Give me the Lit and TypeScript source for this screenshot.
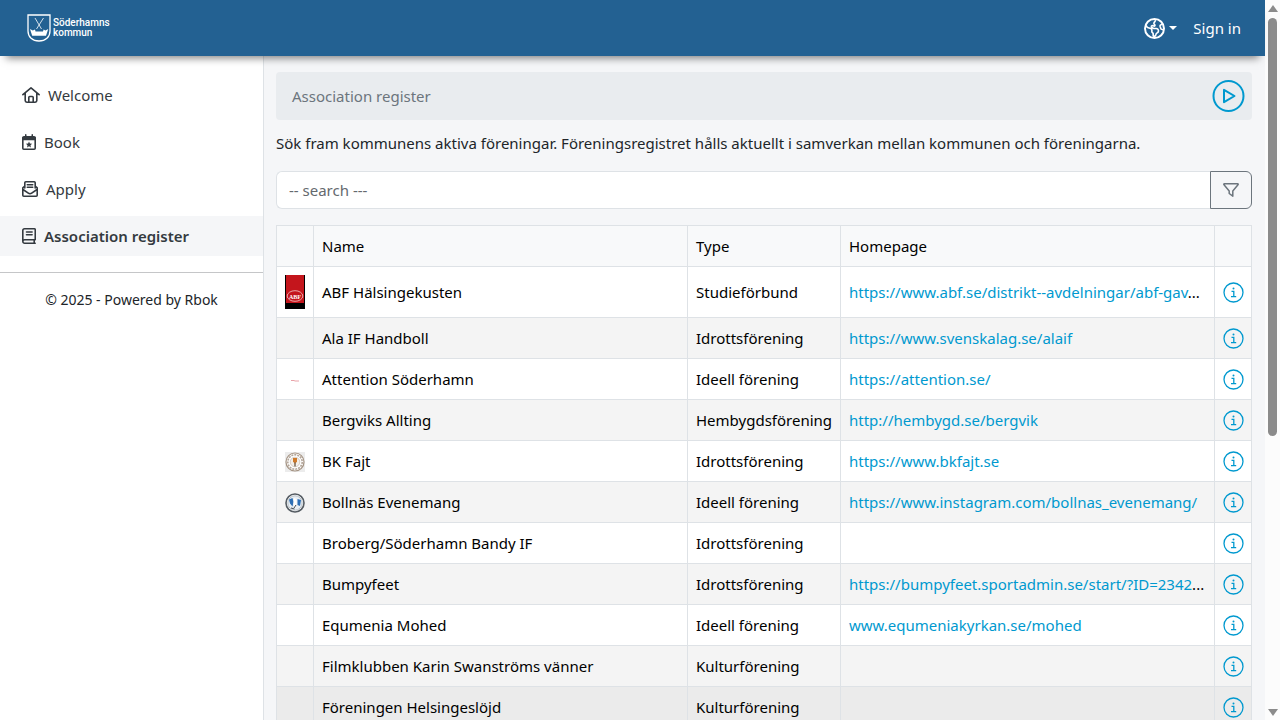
import { LitElement, html, css, nothing } from "lit";
import { customElement } from "lit/decorators.js";
import { classMap } from "lit/directives/class-map.js";

const homeIcon = html`<svg width="18" height="16" viewBox="0 0 18 16" fill="none" stroke="currentColor" stroke-width="1.6" stroke-linecap="round" stroke-linejoin="round" aria-hidden="true">
  <path d="M.9 7.7 9 .9l8.1 6.8M3.2 6v7.6c0 1 .6 1.6 1.6 1.6h8.4c1 0 1.6-.6 1.6-1.6V6M6.8 15V10.4c0-.6.3-.9.9-.9h2.600c.6 0 .9.3.9.9V15"/></svg>`;
const bookIcon = html`<svg width="14" height="16" viewBox="0 0 14 16" aria-hidden="true">
  <path fill="none" stroke="currentColor" stroke-width="1.6" d="M.8 4h12.400v10.200a1 1 0 0 1-1 1H1.800a1 1 0 0 1-1-1z"/>
  <path fill="currentColor" d="M0 6.300V4a2 2 0 0 1 2-2h1V.7C3 .3 3.300 0 3.750 0s.750.300.750.700V2h5V.7c0-.4.300-.7.750-.7s.750.300.750.700V2h1a2 2 0 0 1 2 2v2.300z"/>
  <path fill="currentColor" d="m7 7.400.9 2 2.200.300-1.600 1.500.400 2.200L7 12.300l-1.900 1.100.400-2.200-1.600-1.500 2.200-.3z"/></svg>`;
const applyIcon = html`<svg width="16" height="16" viewBox="0 0 16 16" fill="none" stroke="currentColor" stroke-width="1.6" stroke-linecap="round" stroke-linejoin="round" aria-hidden="true">
  <path d="M2.800 7V1.800c0-.6.400-1 1-1h8.400c.6 0 1 .4 1 1V7M5.300 3.700h5.400M5.300 6.200h5.400M2.800 5 .8 6.800v7.400c0 .6.400 1 1 1h12.400c.6 0 1-.4 1-1V6.800L13.200 5M1 8.500l5.300 3.700c1 .7 2.400.7 3.400 0L15 8.500"/></svg>`;
const registerIcon = html`<svg width="14" height="16" viewBox="0 0 14 16" fill="none" stroke="currentColor" stroke-width="1.6" stroke-linecap="round" stroke-linejoin="round" aria-hidden="true">
  <path d="M13.200 11.700H2.600a1.750 1.750 0 0 0 0 3.500h10.600M12.200 11.900v3.200M.8 13.300V2.600c0-1 .8-1.800 1.850-1.800h9.700c.5 0 .9.400.9.900v10M4.500 4h5.600M4.500 6.800h5.600"/></svg>`;
const globeIcon = html`<svg width="21" height="21" viewBox="0 0 512 512" fill="none" stroke="currentColor" stroke-width="40" stroke-linejoin="round" aria-hidden="true">
  <circle cx="256" cy="256" r="232" stroke-width="48"/>
  <path d="M48 180l19 29c8 15 22 25 38 30l58 17c17 5 29 20 29 38v40c0 11 6 21 16 26s16 15 16 26v39c0 16 15 27 30 23 16-5 28-18 32-34l3-11c4-17 15-32 30-40l8-5c15-8 25-24 25-41v-9c0-13-5-25-14-34l-4-4c-9-9-21-14-34-14h-43c-11 0-22-3-32-8l-34-20c-5-3-8-7-10-12-3-9 1-20 11-24l6-3c6-4 14-4 21-2l23 8c8 3 17 0 22-7 5-7 4-17-1-23l-14-16c-10-12-10-30 0-42l16-18c9-10 10-25 4-37M446 151l-34 14c-16 6-24 24-19 40l17 50c4 11 12 18 23 21l38 9"/></svg>`;
const playIcon = html`<svg width="33" height="33" viewBox="0 0 33 33" fill="none" stroke="currentColor" stroke-width="2" stroke-linejoin="round" aria-hidden="true">
  <circle cx="16.5" cy="16" r="15"/><path d="M12 9.800v12.400L22.500 16z"/></svg>`;
const filterIcon = html`<svg width="16" height="16" viewBox="0 0 16 16" fill="none" stroke="currentColor" stroke-width="1.500" stroke-linejoin="round" aria-hidden="true">
  <path d="M1.400 1.750h13.200c.6 0 .8.600.4 1.100L9.800 8.900v5.300L6.200 11.500V8.900L1 2.850c-.4-.5-.2-1.100.4-1.100z"/></svg>`;
const infoIcon = html`<svg width="21" height="21" viewBox="0 0 21 21" fill="none" stroke="currentColor" stroke-width="1.300" aria-hidden="true">
  <circle cx="10.500" cy="10.500" r="9.500"/><path d="M8.500 9.300h2.300v5.300M8 14.600h5.200"/><circle cx="10.500" cy="6.600" r="1" fill="currentColor" stroke="none"/></svg>`;
const shield = html`<svg width="24" height="28" viewBox="0 0 24 28" fill="none" stroke="#fff" aria-hidden="true">
  <path stroke-width="1.300" d="M1 1h22v16c0 6-4.500 10-11 10S1 23 1 17z"/>
  <path stroke-width=".8" d="m8 4 6.500 11M16.500 4 9.500 15"/>
  <path fill="#fff" stroke="none" d="m3 15 2.800 1.500 2.200-1 .5 2h7.500l.6-2 1.800 1 2.800-1.500-2.200 6.700H5.200z"/></svg>`;

const abfLogo = html`<svg width="20" height="34" viewBox="0 0 20 34" role="img" aria-label="ABF">
  <path d="M0 0h20v34H0z"/><path fill="#c4151c" d="M1 0h18v28H1z"/>
  <ellipse cx="10" cy="21" rx="7.800" ry="5.300" fill="none" stroke="#f3c9ca" stroke-width=".8"/>
  <text x="10" y="23.500" text-anchor="middle" font-family="Liberation Serif, serif" font-weight="700" font-size="6" fill="#fff">ABF</text></svg>`;
const attentionLogo = html`<svg class="emblem" width="20" height="20" viewBox="0 0 20 20" role="img" aria-label="Attention">
  <path stroke="#e9a3a9" stroke-width="1" fill="none" d="M6 10.500h3l1 .5h4"/></svg>`;
const fajtLogo = html`<svg class="emblem" width="20" height="20" viewBox="0 0 20 20" role="img" aria-label="BK Fajt">
  <path fill="#ececec" d="M0 0h20v20H0z"/><circle cx="10" cy="10" r="9" fill="#fff" stroke="#a59484" stroke-width="1.200"/>
  <circle cx="10" cy="10" r="7.200" fill="none" stroke="#b3a598" stroke-width="1.600" stroke-dasharray="2 1"/>
  <circle cx="10" cy="10" r="4.800" fill="#f4efe9" stroke="#c8bcb0" stroke-width=".7"/>
  <path fill="#cf7a2b" d="M8 6h4v3.500L10 12 8 9.500z"/><path stroke="#7d6a58" stroke-width="1.500" d="M10 10.500v4"/></svg>`;
const bollnasLogo = html`<svg class="emblem" width="20" height="20" viewBox="0 0 20 20" role="img" aria-label="Bollnäs Evenemang">
  <circle cx="10" cy="10" r="9" fill="#fff" stroke="#555c63" stroke-width="1.600"/>
  <circle cx="10" cy="10" r="7.200" fill="#e8eef4" stroke="#aab2ba" stroke-width=".8"/>
  <path fill="#2d6fb5" d="M4 6.500 7.500 5l1 4-1 4.500L5 10.500zM12.500 6l3.500 1-1 6-2.500-1z"/><path fill="#fff" d="m9 5 2.500 1v5L10 15l-1.500-4z"/>
  <path stroke="#444b52" fill="none" d="m6 15 3.500 1M11 12l-2 3"/></svg>`;

const menu = [
  { label: "Welcome", icon: homeIcon, active: false },
  { label: "Book", icon: bookIcon, active: false },
  { label: "Apply", icon: applyIcon, active: false },
  { label: "Association register", icon: registerIcon, active: true },
];

interface Association {
  name: string;
  type: string;
  url?: string;
  shortened?: boolean;
  logo?: unknown;
  current?: boolean;
}

const associations: Association[] = [
  { name: "ABF Hälsingekusten", type: "Studieförbund", url: "https://www.abf.se/distrikt--avdelningar/abf-gav", shortened: true, logo: abfLogo },
  { name: "Ala IF Handboll", type: "Idrottsförening", url: "https://www.svenskalag.se/alaif" },
  { name: "Attention Söderhamn", type: "Ideell förening", url: "https://attention.se/", logo: attentionLogo },
  { name: "Bergviks Allting", type: "Hembygdsförening", url: "http://hembygd.se/bergvik" },
  { name: "BK Fajt", type: "Idrottsförening", url: "https://www.bkfajt.se", logo: fajtLogo },
  { name: "Bollnäs Evenemang", type: "Ideell förening", url: "https://www.instagram.com/bollnas_evenemang/", logo: bollnasLogo },
  { name: "Broberg/Söderhamn Bandy IF", type: "Idrottsförening" },
  { name: "Bumpyfeet", type: "Idrottsförening", url: "https://bumpyfeet.sportadmin.se/start/?ID=2342", shortened: true },
  { name: "Equmenia Mohed", type: "Ideell förening", url: "www.equmeniakyrkan.se/mohed" },
  { name: "Filmklubben Karin Swanströms vänner", type: "Kulturförening" },
  { name: "Föreningen Helsingeslöjd", type: "Kulturförening", current: true },
];

@customElement("app-root")
export class AppRoot extends LitElement {
  static styles = css`
    :host { display: flex; height: 100vh; overflow: hidden; font: 15px/24px "Noto Sans", "Open Sans", sans-serif; color: #212529; background: #f5f6f8; }
    *, *::before, *::after { box-sizing: border-box; }
    a { text-decoration: none; color: #0099cf; }
    button { font: inherit; cursor: pointer; padding: 0; background: none; border: 0; }
    svg { display: block; flex: none; }
    .page { flex: 1; min-width: 0; display: flex; flex-direction: column; }
    .topbar { flex: none; height: 56px; padding: 0 24px 0 27px; display: flex; align-items: center; justify-content: space-between; background: #236192; color: #fff; box-shadow: 0 8px 8px -6px rgba(0, 0, 0, .5); z-index: 1; }
    .brand { display: flex; align-items: center; gap: 2px; color: #fff; }
    .wordmark { display: grid; font: 500 10px/10px Roboto, sans-serif; }
    .tools { display: flex; align-items: center; gap: 16px; }
    .language { display: flex; align-items: center; gap: 4px; color: #fff; }
    .caret { border: 4px solid transparent; border-top-color: currentColor; border-bottom: 0; }
    .signin { color: #fff; }
    .body { flex: 1; min-height: 0; display: flex; }
    .sidebar { flex: none; width: 264px; background: #fff; border-right: 1px solid #dee2e6; padding-top: 19px; }
    .menu { list-style: none; margin: 0 0 16px; padding: 0; display: grid; gap: 7px; }
    .item { display: flex; align-items: center; gap: 8px; height: 40px; padding: 0 22px; color: #343a40; }
    .item.active { background: #f5f6f8; font-weight: 600; }
    .copyright { border-top: 1px solid #c5c6c8; padding-top: 15px; text-align: center; font-size: 14px; }
    .content { flex: 1; min-width: 0; padding: 16px 13px 0 12px; overflow: hidden; }
    .crumbs { display: flex; align-items: center; justify-content: space-between; height: 48px; padding: 0 7px 0 16px; background: #e9ecef; border-radius: 4px; color: #6c757d; }
    .play { color: #0099cf; }
    .intro { margin: 11px 0 16px; }
    .search { display: flex; height: 38px; margin-bottom: 16px; }
    .field { flex: 1; min-width: 0; font: inherit; padding: 0 12px; border: 1px solid #dee2e6; border-right: 0; border-radius: 6px 0 0 6px; background: #fff; color: #212529; }
    .field::placeholder { color: #64696e; opacity: 1; }
    .filter { width: 42px; display: grid; place-items: center; border: 1px solid #6c757d; border-radius: 0 6px 6px 0; color: #6c757d; }
    .register { width: 100%; table-layout: fixed; border-collapse: collapse; color: #000; background: #fff; }
    .register th, .register td { border: 1px solid #dee2e6; padding: 8px; text-align: left; font-weight: 400; white-space: nowrap; height: 41px; }
    .register th { background: #f8f9fa; }
    .register .kind { padding-right: 4px; }
    .register .details { padding: 0 8px; }
    .striped { background: #f4f4f4; }
    .current { background: #ebebeb; }
    .narrow { width: 37px; }
    .type { width: 153px; }
    .emblem { margin-top: 2px; }
    .info { display: block; color: #0099cf; }
    .scrollbar { flex: none; width: 15px; background: #fcfcfc; display: flex; flex-direction: column; align-items: center; padding: 5px 0 4px; }
    .arrow { border: 5px solid transparent; border-top: 0; border-bottom: 7px solid #8b8b8b; }
    .arrow.down { border-bottom: 0; border-top: 7px solid #8b8b8b; }
    .track { flex: 1; width: 9px; margin: 6px 0; }
    .thumb { height: 61%; background: #8b8b8b; border-radius: 5px; }
  `;

  render() {
    return html`
      <div class="page">
        <header class="topbar">
          <a class="brand" href="#">${shield}<span class="wordmark"><span>Söderhamns</span><span>kommun</span></span></a>
          <div class="tools">
            <button class="language" aria-label="Language">${globeIcon}<span class="caret"></span></button>
            <a class="signin" href="#">Sign in</a>
          </div>
        </header>
        <div class="body">
          <nav class="sidebar">
            <ul class="menu">
              ${menu.map((m) => html`<li><a class=${classMap({ item: true, active: m.active })} href="#">${m.icon}<span>${m.label}</span></a></li>`)}
            </ul>
            <div class="copyright">© 2025 - Powered by Rbok</div>
          </nav>
          <main class="content">
            <div class="crumbs"><span>Association register</span><button class="play" aria-label="Play">${playIcon}</button></div>
            <p class="intro">Sök fram kommunens aktiva föreningar. Föreningsregistret hålls aktuellt i samverkan mellan kommunen och föreningarna.</p>
            <div class="search">
              <input class="field" type="text" placeholder="-- search ---" aria-label="Search">
              <button class="filter" aria-label="Filter">${filterIcon}</button>
            </div>
            <table class="register">
              <thead><tr><th class="narrow"></th><th>Name</th><th class="type">Type</th><th>Homepage</th><th class="narrow"></th></tr></thead>
              <tbody>
                ${associations.map((a, i) => html`<tr class=${classMap({ striped: i % 2 === 1, current: !!a.current })}>
                  <td>${a.logo ?? nothing}</td>
                  <td>${a.name}</td>
                  <td class="kind">${a.type}</td>
                  <td>${a.url ? html`<a href=${a.url}>${a.url}</a>${a.shortened ? "..." : nothing}` : nothing}</td>
                  <td class="details"><button class="info" aria-label="Details for ${a.name}">${infoIcon}</button></td>
                </tr>`)}
              </tbody>
            </table>
          </main>
        </div>
      </div>
      <div class="scrollbar" aria-hidden="true">
        <span class="arrow"></span>
        <div class="track"><div class="thumb"></div></div>
        <span class="arrow down"></span>
      </div>
    `;
  }
}
